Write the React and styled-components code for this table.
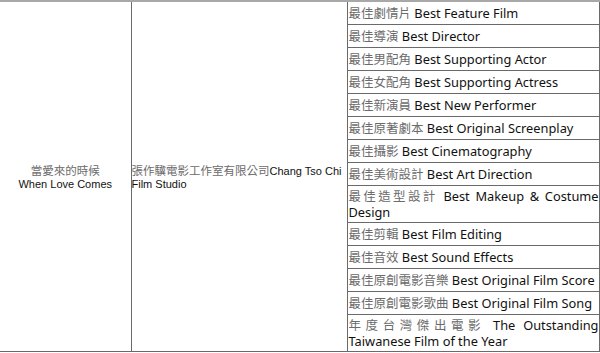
import styled, { createGlobalStyle } from "styled-components";

const GlobalStyle = createGlobalStyle`
  html, body {
    margin: 0;
    padding: 0;
    background: #ffffff;
  }
`;

const awards = [
  ["最佳劇情片", "Best Feature Film"],
  ["最佳導演", "Best Director"],
  ["最佳男配角", "Best Supporting Actor"],
  ["最佳女配角", "Best Supporting Actress"],
  ["最佳新演員", "Best New Performer"],
  ["最佳原著劇本", "Best Original Screenplay"],
  ["最佳攝影", "Best Cinematography"],
  ["最佳美術設計", "Best Art Direction"],
  ["最佳造型設計", "Best Makeup & Costume Design"],
  ["最佳剪輯", "Best Film Editing"],
  ["最佳音效", "Best Sound Effects"],
  ["最佳原創電影音樂", "Best Original Film Score"],
  ["最佳原創電影歌曲", "Best Original Film Song"],
  ["年度台灣傑出電影", "The Outstanding Taiwanese Film of the Year"],
];

const App = () => {
  return (
    <>
      <GlobalStyle />
      <Table>
        <colgroup>
          <col style={{ width: 131 }} />
          <col style={{ width: 216 }} />
          <col style={{ width: 252 }} />
        </colgroup>
        <tbody>
          {awards.map(([zh, en], i) => (
            <tr key={en}>
              {i === 0 && (
                <>
                  <TitleCell rowSpan={awards.length}>
                    <Zh>當愛來的時候</Zh>
                    <br />
                    When Love Comes
                  </TitleCell>
                  <StudioCell rowSpan={awards.length}>
                    <Zh>張作驥電影工作室有限公司</Zh>Chang Tso Chi Film Studio
                  </StudioCell>
                </>
              )}
              <AwardCell>
                <AwardZh>{zh}</AwardZh> {en}
              </AwardCell>
            </tr>
          ))}
        </tbody>
      </Table>
    </>
  );
};

const Table = styled.table`
  width: 599px;
  table-layout: fixed;
  border-collapse: collapse;
  color: #111111;

  td {
    border: 1px solid #6a6a6a;
    padding: 0;
  }

  tr:first-child td {
    border-top: 2px solid #a8a8a8;
  }
`;

const TitleCell = styled.td`
  border-left: none !important;
  text-align: center;
  vertical-align: middle;
  font-family: "Liberation Sans", Arial, "Noto Sans CJK TC", sans-serif;
  font-size: 11px;
  line-height: 13px;
  padding-top: 4px !important;
`;

const StudioCell = styled.td`
  vertical-align: middle;
  font-family: "Liberation Sans", Arial, "Noto Sans CJK TC", sans-serif;
  font-size: 11px;
  line-height: 13px;
  padding-top: 4px !important;
`;

const Zh = styled.span`
  font-family: "Noto Sans CJK TC", sans-serif;
  font-size: 11.5px;
  line-height: 8px;
  color: #6b6b6b;
`;

const AwardCell = styled.td`
  height: 23px;
  box-sizing: border-box;
  font-family: "Noto Sans", "Noto Sans CJK TC", sans-serif;
  font-size: 12.8px;
  line-height: 16px;
  text-align: justify;
  padding: 2px 0 2px 1px !important;
`;

const AwardZh = styled.span`
  font-family: "Noto Sans CJK TC", sans-serif;
  font-size: 12.5px;
  line-height: 8px;
  color: #6b6b6b;
`;

export default App;
